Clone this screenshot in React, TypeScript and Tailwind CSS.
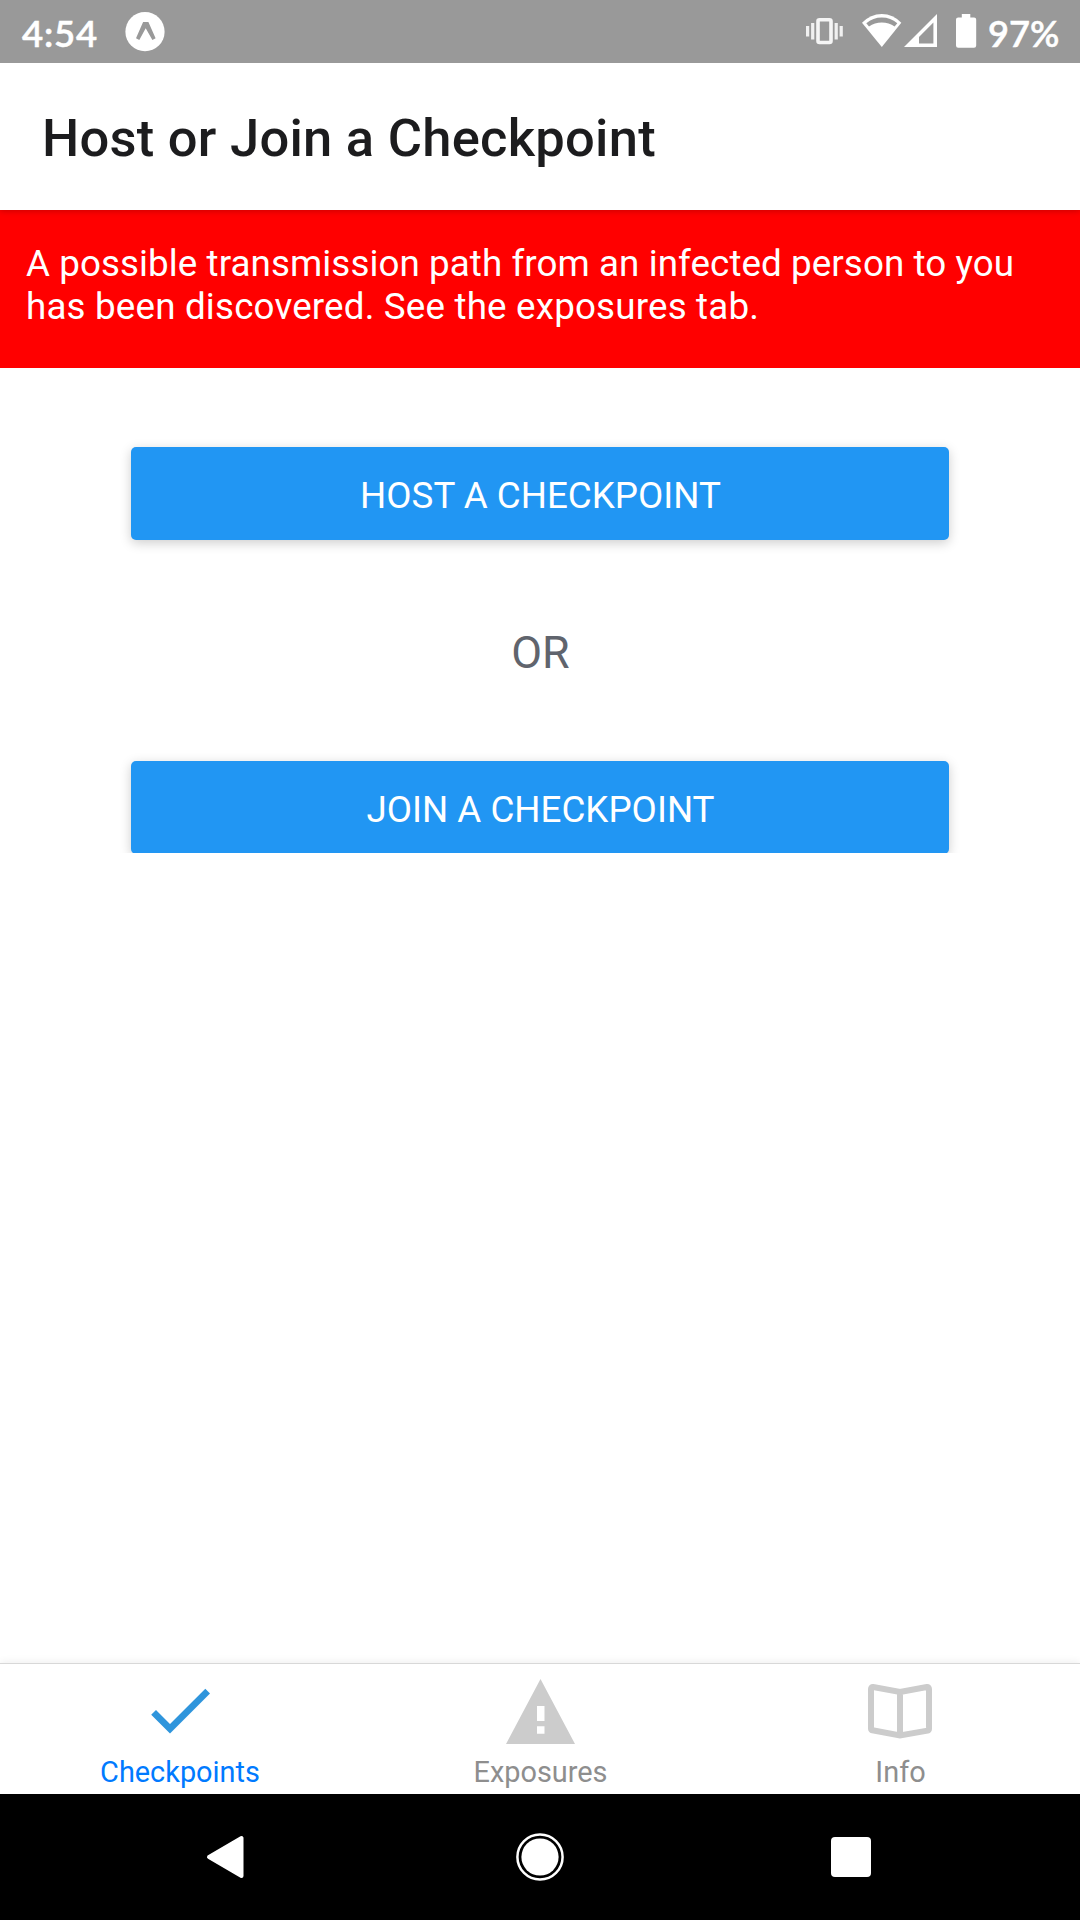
import type { ReactNode } from "react";

function StatusBar() {
  return (
    <div className="relative z-20 flex h-[63px] items-center justify-between bg-[#999999] pr-[22px] pl-[22px] text-white">
      <div className="flex items-center">
        <span className="w-[103px] pt-[3px] font-['Lato'] text-[36.5px] leading-[60px] font-semibold tracking-[0.8px] [-webkit-text-stroke:0.5px_white]">4:54</span>
        <svg width="40" height="40" viewBox="124.5 12 40 40" className="block">
          <circle cx="144.5" cy="31.7" r="19.6" fill="#fff" />
          <path d="M142.6 22h5.3l7.2 16.3-3.2 1.8-6.7-11.8-6.4 11.8-3.3-1.8z" fill="#999" />
        </svg>
      </div>
      <div className="flex items-center">
        <svg width="186" height="63" viewBox="802 0 186 63" className="block">
          <rect x="818" y="19.7" width="13" height="22.8" rx="1.5" fill="none" stroke="#f5f5f5" strokeWidth="3.6" />
          <path d="M812.7 23v16.6M807.6 26v10.4M836.2 23v16.6M841.2 26v10.4" stroke="#f0f0f0" strokeWidth="3.2" />
          <path d="M881.8 47L862 22.8Q870.5 14 881.8 14T901.3 22.8z" fill="#fff" />
          <path d="M866.3 23.3Q873 17.4 881.8 17.4T897.3 23.3L894.6 26.6Q889 22.4 881.8 22.4T869 26.6z" fill="#999" />
          <path fillRule="evenodd" d="M904 47L937 14V47zM919 43.5h14.4V22.5L919 37z" fill="#fff" />
          <path d="M961.8 14h8.5v3.4h3.7q2.2 0 2.2 2.2v26q0 2.2-2.2 2.2h-15.8q-2.2 0-2.2-2.2v-26q0-2.2 2.2-2.2h3.6z" fill="#fff" />
        </svg>
        <span className="w-[70px] pt-[3px] font-['Lato'] text-[36.2px] leading-[60px] font-semibold whitespace-nowrap [-webkit-text-stroke:0.5px_white]">97%</span>
      </div>
    </div>
  );
}

function ActionButton({ children }: { children: ReactNode }) {
  return (
    <button className="block h-[93px] w-[818px] rounded-[5px] bg-[#2196f3] pt-[4px] pl-[1px] text-center text-[36.75px] leading-[88px] text-white shadow-[0_3px_12px_rgba(0,0,0,0.2)]">
      {children}
    </button>
  );
}

function Tab({ label, active, children }: { label: string; active?: boolean; children: ReactNode }) {
  return (
    <div className="flex flex-1 flex-col items-center">
      {children}
      <span
        className={
          active
            ? "pt-px text-[28.9px] leading-[34px] text-[#007aff]"
            : "pt-px pl-px text-[28.9px] leading-[34px] text-[#8e8e8e]"
        }
      >
        {label}
      </span>
    </div>
  );
}

export default function App() {
  return (
    <div className="flex h-[1920px] w-[1080px] flex-col overflow-hidden bg-white font-['Roboto',sans-serif]">
      <StatusBar />
      <header className="relative z-10 flex h-[147px] items-center bg-white pl-[42px] shadow-[0_1px_6px_rgba(0,0,0,0.22)]">
        <h1 className="pt-[3px] text-[52.5px] leading-[62px] font-medium tracking-[0.25px] text-[#1c1c1e]">Host or Join a Checkpoint</h1>
      </header>
      <div className="h-[158px] bg-[#ff0000] pt-[32px] pl-[26px] text-[36.75px] leading-[43px] text-white">
        <p className="tracking-[0.08px]">A possible transmission path from an infected person to you</p>
        <p className="tracking-[0.18px]">has been discovered. See the exposures tab.</p>
      </div>
      <main className="flex flex-1 flex-col items-center">
        <div className="pt-[79px]">
          <ActionButton>HOST A CHECKPOINT</ActionButton>
        </div>
        <p className="mt-[81px] pl-[1px] text-[44.8px] leading-[63px] text-[#60646d]">OR</p>
        <div className="mt-[57px] overflow-hidden px-5 pt-5">
          <div className="h-[92px]">
            <ActionButton>JOIN A CHECKPOINT</ActionButton>
          </div>
        </div>
      </main>
      <nav className="relative flex h-[131px] border-t border-[#d8d8d8] bg-white pt-[10px] shadow-[0_-1px_8px_rgba(0,0,0,0.07)]">
        <Tab label="Checkpoints" active>
          <svg width="80" height="80" viewBox="140 1674 80 80" className="block">
            <path d="M170 1724L156 1710l-4.8 4.7 18.8 18.8 40-40-4.7-4.7z" fill="#2f95dc" />
          </svg>
        </Tab>
        <Tab label="Exposures">
          <svg width="80" height="80" viewBox="500 1674 80 80" className="block">
            <path d="M540.5 1679L575 1744H506zM537 1706v15h7.5v-15zM537 1726.3v7.4h7.5v-7.4z" fill="#ccc" fillRule="evenodd" />
          </svg>
        </Tab>
        <Tab label="Info">
          <svg width="80" height="80" viewBox="860 1674 80 80" className="block">
            <path d="M900 1692l26.8-5q2.2-.2 2.2 2v39.7q0 1.5-1.5 1.9L900 1735.5l-27.5-5.2q-1.5-.4-1.5-1.9V1689q0-2.2 2.2-2zV1735" fill="none" stroke="#ccc" strokeWidth="6" />
          </svg>
        </Tab>
      </nav>
      <footer className="relative h-[126px] bg-black">
        <svg width="1080" height="126" viewBox="0 1794 1080 126" className="block">
          <path d="M209 1857L241.5 1838V1876z" fill="#fff" stroke="#fff" strokeWidth="4" strokeLinejoin="round" />
          <circle cx="540" cy="1857" r="22.6" fill="none" stroke="#fff" strokeWidth="2.5" />
          <circle cx="540" cy="1857" r="18.6" fill="#fff" />
          <rect x="831" y="1837" width="40" height="40" rx="4" fill="#fff" />
        </svg>
      </footer>
    </div>
  );
}
